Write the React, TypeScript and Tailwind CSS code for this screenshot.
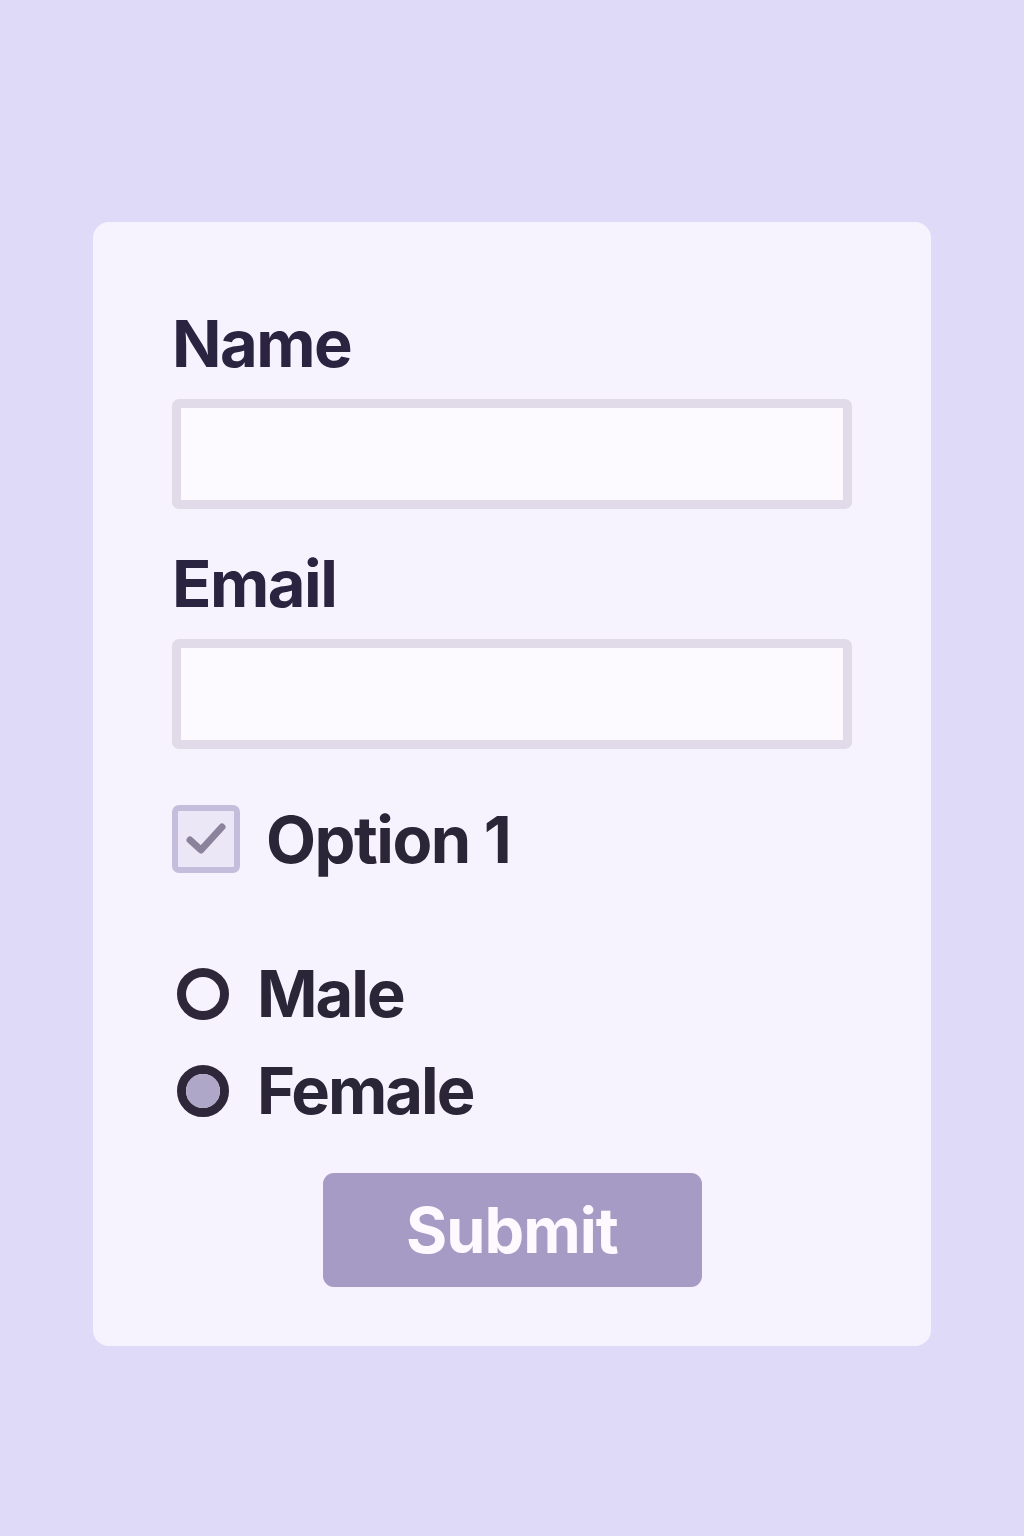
import { useState } from 'react';

const font = { fontFamily: 'Inter, "Noto Sans", sans-serif' };

function Field({ label }: { label: string }) {
  return (
    <div className="flex flex-col">
      <label className="text-[65px] leading-none font-bold tracking-[-1.5px] text-[#2b2440]">{label}</label>
      <input
        type="text"
        className="mt-[23px] h-[110px] w-full rounded-[7px] border-[9px] border-[#e1dbe9] bg-[#fdfaff] outline-none"
      />
    </div>
  );
}

function Radio({ label, checked }: { label: string; checked: boolean }) {
  return (
    <div className="flex items-center">
      <span className="ml-[5px] flex h-[52px] w-[52px] items-center justify-center rounded-full border-[9px] border-[#2d2739]">
        {checked && <span className="h-[34px] w-[34px] rounded-full bg-[#aea7c8]" />}
      </span>
      <span className="ml-[28px] text-[65px] leading-none font-bold tracking-[-2px] text-[#2b2538]">{label}</span>
    </div>
  );
}

export default function App() {
  const [gender] = useState('female');

  return (
    <div className="min-h-[1536px] w-full bg-[#e0daf9] pt-[222px]" style={font}>
      <div className="mx-auto flex w-[838px] flex-col rounded-[16px] bg-[#f7f3fe] px-[79px] pt-[89px] pb-[59px]">
        <Field label="Name" />
        <div className="mt-[42px]">
          <Field label="Email" />
        </div>

        <div className="mt-[56px] flex items-center">
          <span className="flex h-[68px] w-[68px] items-center justify-center rounded-[7px] border-[6px] border-[#c5bddc] bg-[#ebe7f6]">
            <svg width="40" height="32" viewBox="0 0 40 32" fill="none">
              <path d="M4 17 L15 27 L36 4" stroke="#8b839b" strokeWidth="7" strokeLinecap="round" strokeLinejoin="round" />
            </svg>
          </span>
          <span className="ml-[26px] text-[65px] leading-none font-bold tracking-[-1.5px] text-[#2b2538]">Option 1</span>
        </div>

        <div className="mt-[88px] flex flex-col gap-[32px]">
          <Radio label="Male" checked={gender === 'male'} />
          <Radio label="Female" checked={gender === 'female'} />
        </div>

        <div className="mt-[50px] flex justify-center">
          <button className="h-[114px] w-[379px] rounded-[11px] bg-[#a59bc4] text-[63px] leading-none font-bold tracking-[-1px] text-[#fdf9ff]">
            Submit
          </button>
        </div>
      </div>
    </div>
  );
}
